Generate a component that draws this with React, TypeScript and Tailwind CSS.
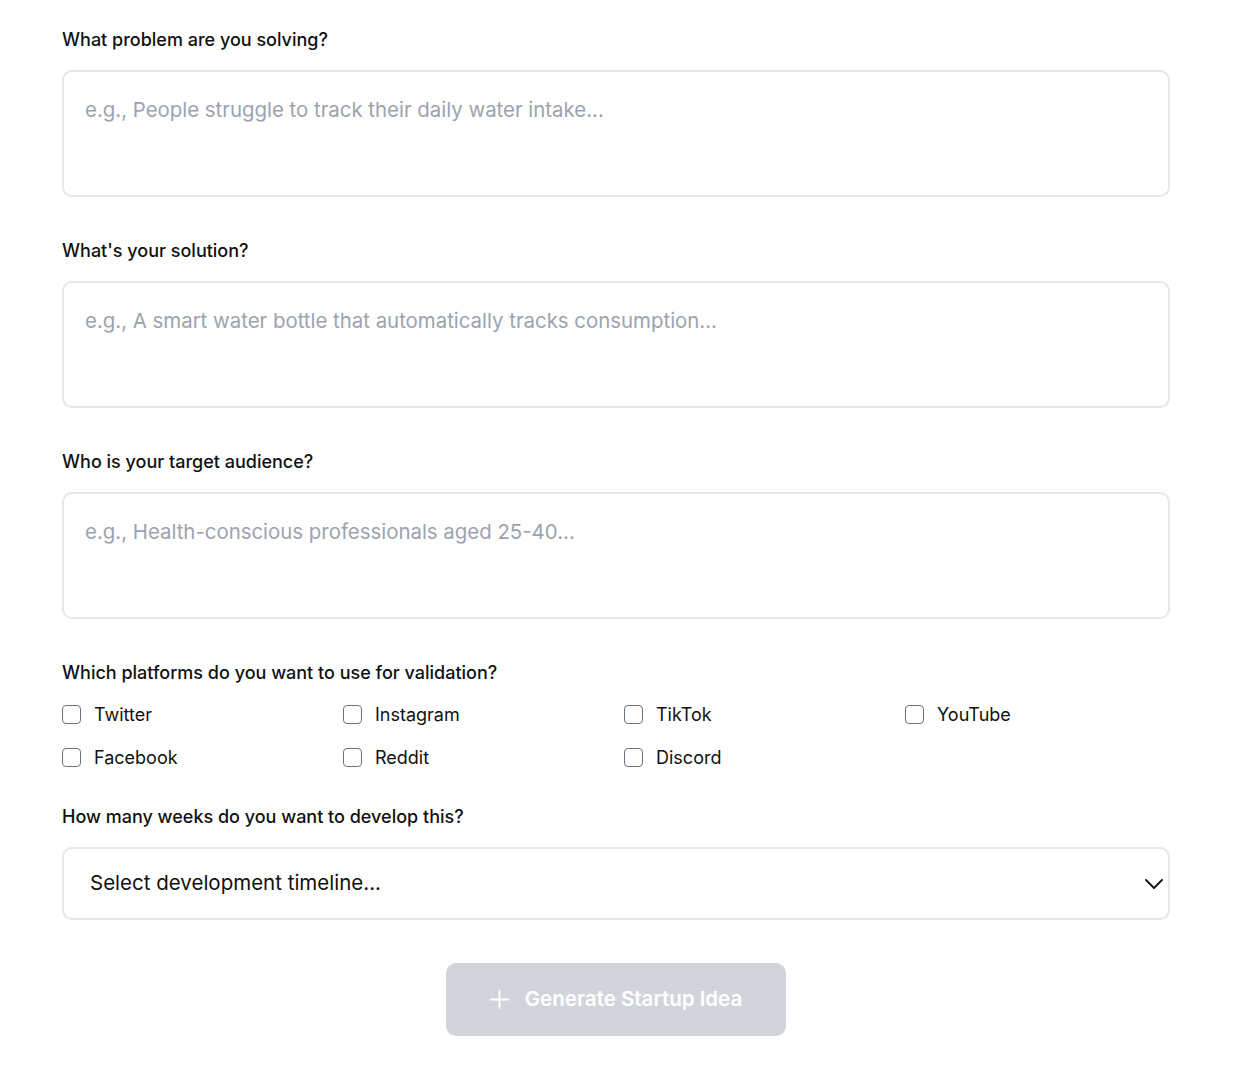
import { useState } from "react";

const platforms = [
  "Twitter",
  "Instagram",
  "TikTok",
  "YouTube",
  "Facebook",
  "Reddit",
  "Discord",
];

const fields = [
  {
    label: "What problem are you solving?",
    placeholder: "e.g., People struggle to track their daily water intake...",
  },
  {
    label: "What's your solution?",
    placeholder: "e.g., A smart water bottle that automatically tracks consumption...",
  },
  {
    label: "Who is your target audience?",
    placeholder: "e.g., Health-conscious professionals aged 25-40...",
  },
];

export default function App() {
  const [checked, setChecked] = useState<string[]>([]);

  const toggle = (p: string) => {
    setChecked((c) => (c.includes(p) ? c.filter((x) => x !== p) : [...c, p]));
  };

  return (
    <div className="min-h-[1074px] w-full bg-white font-['Inter',sans-serif] text-[#111]">
      <div className="ml-[62px] w-[1108px] pt-[26px] flex flex-col">
        {fields.map((f) => (
          <div key={f.label} className="mb-10 flex flex-col gap-4">
            <label className="text-[18px] leading-7 font-medium">{f.label}</label>
            <textarea
              className="h-[127px] resize-none rounded-[10px] border-2 border-[#e5e7eb] px-[21px] py-6 text-[20.4px] leading-7 outline-none placeholder:text-[#9ca3af]"
              placeholder={f.placeholder}
            />
          </div>
        ))}

        <div className="flex flex-col gap-[15px]">
          <label className="text-[18px] leading-7 font-medium">
            Which platforms do you want to use for validation?
          </label>
          <div className="grid grid-cols-4 gap-x-4 gap-y-[19px]">
            {platforms.map((p) => (
              <label key={p} className="flex h-6 items-center gap-[13px] cursor-pointer">
                <input
                  type="checkbox"
                  checked={checked.includes(p)}
                  onChange={() => toggle(p)}
                  className="h-[19px] w-[19px] appearance-none rounded-[4px] border-[1.5px] border-[#6b7280] bg-white checked:bg-[#111]"
                />
                <span className="text-[18px]">{p}</span>
              </label>
            ))}
          </div>
        </div>

        <div className="mt-[34px] flex flex-col gap-4">
          <label className="text-[18px] leading-7 font-medium">
            How many weeks do you want to develop this?
          </label>
          <div className="flex h-[73px] items-center justify-between rounded-[10px] border-2 border-[#e5e7eb] pl-[26px] pr-[5px]">
            <span className="text-[20.5px]">Select development timeline...</span>
            <svg width="18" height="10" viewBox="0 0 18 10" fill="none" stroke="#111" strokeWidth="1.8" strokeLinecap="round" strokeLinejoin="round">
              <path d="M1 1l8 8 8-8" />
            </svg>
          </div>
        </div>

        <div className="mt-[43px] flex justify-center">
          <button
            disabled
            className="flex h-[73px] w-[340px] items-center justify-center gap-4 rounded-[10px] bg-[#d1d5db] text-[20.5px] font-semibold text-white"
          >
            <svg width="19" height="19" viewBox="0 0 19 19" fill="none" stroke="white" strokeWidth="1.8" strokeLinecap="round">
              <path d="M9.5 1v17M1 9.5h17" />
            </svg>
            Generate Startup Idea
          </button>
        </div>
      </div>
    </div>
  );
}
